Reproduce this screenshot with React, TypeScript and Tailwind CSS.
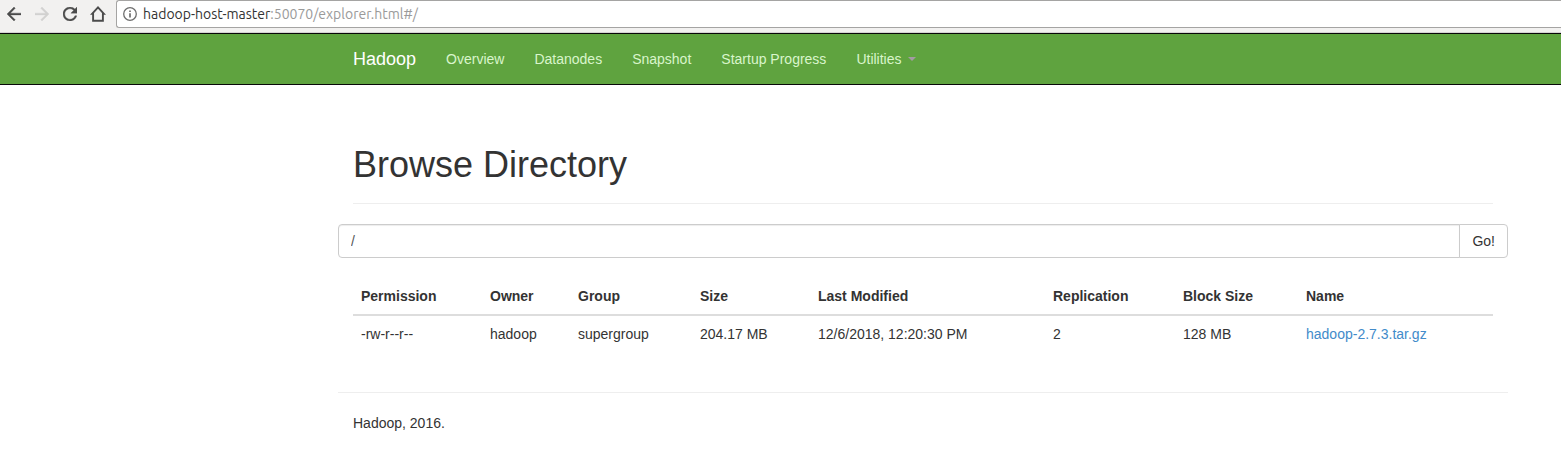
import { useState } from "react";

const links = ["Overview", "Datanodes", "Snapshot", "Startup Progress"];

const columns = [
  { label: "Permission", width: "w-[129px]" },
  { label: "Owner", width: "w-[88px]" },
  { label: "Group", width: "w-[122px]" },
  { label: "Size", width: "w-[118px]" },
  { label: "Last Modified", width: "w-[235px]" },
  { label: "Replication", width: "w-[130px]" },
  { label: "Block Size", width: "w-[123px]" },
  { label: "Name", width: "w-auto" },
];

const files = [
  {
    permission: "-rw-r--r--",
    owner: "hadoop",
    group: "supergroup",
    size: "204.17 MB",
    modified: "12/6/2018, 12:20:30 PM",
    replication: "2",
    blockSize: "128 MB",
    name: "hadoop-2.7.3.tar.gz",
  },
];

function BrowserBar() {
  return (
    <div className="flex h-[33px] items-start border-b border-[#d4d3d2] bg-[#f2f1f0] pl-[7px] text-[#4b4b4b]">
      <div className="flex h-7 shrink-0 items-center gap-[14px]">
        <button type="button" aria-label="Back">
          <svg className="block size-[14px]" viewBox="4 4 16 16" fill="currentColor" stroke="currentColor" strokeWidth="0.4">
            <path d="M20 11H7.83l5.59-5.59L12 4l-8 8 8 8 1.41-1.41L7.83 13H20v-2z" />
          </svg>
        </button>
        <button type="button" aria-label="Forward" className="text-[#d2d1d0]">
          <svg className="block size-[14px]" viewBox="4 4 16 16" fill="currentColor" stroke="currentColor" strokeWidth="0.4">
            <path d="M12 4l-1.41 1.41L16.17 11H4v2h12.17l-5.58 5.59L12 20l8-8z" />
          </svg>
        </button>
        <button type="button" aria-label="Reload">
          <svg className="block size-[14px]" viewBox="4 4 16 16" fill="currentColor" stroke="currentColor" strokeWidth="0.4">
            <path d="M17.65 6.35C16.2 4.9 14.21 4 12 4c-4.42 0-7.99 3.58-7.99 8s3.57 8 7.99 8c3.73 0 6.84-2.55 7.73-6h-2.08c-.82 2.33-3.04 4-5.65 4-3.31 0-6-2.69-6-6s2.69-6 6-6c1.66 0 3.14.69 4.22 1.78L13 11h7V4l-2.35 2.35z" />
          </svg>
        </button>
        <button type="button" aria-label="Home" className="-mx-px">
          <svg className="block size-4" viewBox="0 0 16 16" fill="none" stroke="currentColor" strokeWidth="1.9">
            <path d="M8 1.4 L14 7.9 H12.9 V14.8 H3.1 V7.9 H2 Z" />
          </svg>
        </button>
      </div>
      <div className="ml-[11px] flex h-7 flex-1 items-center gap-[6px] rounded-l-[3px] border border-r-0 border-[#a5a4a3] bg-white pl-[6px]">
        <svg className="size-[14px] shrink-0" viewBox="0 0 14 14" fill="none" stroke="#6e6e6e">
          <circle cx="7" cy="7" r="6.3" strokeWidth="1.3" />
          <path d="M7 6.2V10.4M7 3.5V5" strokeWidth="1.7" />
        </svg>
        <div className="font-[Ubuntu,'Noto_Sans',sans-serif] text-[14px] leading-5 whitespace-nowrap text-[#333]">
          hadoop-host-master<span className="text-[#9a9a9a]">:50070/explorer.html#/</span>
        </div>
      </div>
    </div>
  );
}

function NavBar() {
  return (
    <nav className="flex border-y border-[#080808] bg-[#5fa33f] pl-[338px] text-[#d9f5cb]">
      <a href="#/" className="p-[15px] text-[18px] leading-5 text-white">
        Hadoop
      </a>
      <ul className="flex">
        {links.map((link) => (
          <li key={link}>
            <a href="#/" className="block p-[15px] whitespace-nowrap">
              {link}
            </a>
          </li>
        ))}
        <li>
          <button type="button" className="flex items-center gap-[6px] p-[15px]">
            Utilities
            <span className="border-x-4 border-t-4 border-x-transparent border-t-[#a39ba3]" />
          </button>
        </li>
      </ul>
    </nav>
  );
}

export default function App() {
  const [path, setPath] = useState("/");

  return (
    <div className="min-h-screen bg-white font-['Liberation_Sans',Arial,sans-serif] text-[14px] leading-5 text-[#333]">
      <BrowserBar />
      <NavBar />
      <main className="pt-[60px] pr-[53px] pl-[338px]">
        <header className="mx-[15px] border-b border-[#eee] pb-[18px]">
          <h1 className="text-[36px] leading-10 font-medium">Browse Directory</h1>
        </header>
        <form className="mt-5 flex" onSubmit={(e) => e.preventDefault()}>
          <input
            aria-label="Directory path"
            value={path}
            onChange={(e) => setPath(e.target.value)}
            className="h-[34px] min-w-0 flex-1 rounded-l-[4px] border border-[#ccc] px-3 text-[#555] shadow-[inset_0_1px_1px_rgba(0,0,0,0.075)] outline-none"
          />
          <button type="submit" className="-ml-px h-[34px] rounded-r-[4px] border border-[#ccc] bg-white px-3">
            Go!
          </button>
        </form>
        <div className="mx-[15px] mt-5">
          <table className="w-full border-collapse text-left">
            <colgroup>
              {columns.map((column) => (
                <col key={column.label} className={column.width} />
              ))}
            </colgroup>
            <thead>
              <tr>
                {columns.map((column) => (
                  <th key={column.label} className="border-b-2 border-[#ddd] p-2 font-bold">
                    {column.label}
                  </th>
                ))}
              </tr>
            </thead>
            <tbody>
              {files.map((file) => (
                <tr key={file.name}>
                  <td className="p-2">{file.permission}</td>
                  <td className="p-2">{file.owner}</td>
                  <td className="p-2">{file.group}</td>
                  <td className="p-2">{file.size}</td>
                  <td className="p-2">{file.modified}</td>
                  <td className="p-2">{file.replication}</td>
                  <td className="p-2">{file.blockSize}</td>
                  <td className="p-2">
                    <a href="#/" className="text-[#428bca]">
                      {file.name}
                    </a>
                  </td>
                </tr>
              ))}
            </tbody>
          </table>
        </div>
        <footer className="mt-10 border-t border-[#eee] px-[15px] pt-5">
          <p>Hadoop, 2016.</p>
        </footer>
      </main>
    </div>
  );
}
